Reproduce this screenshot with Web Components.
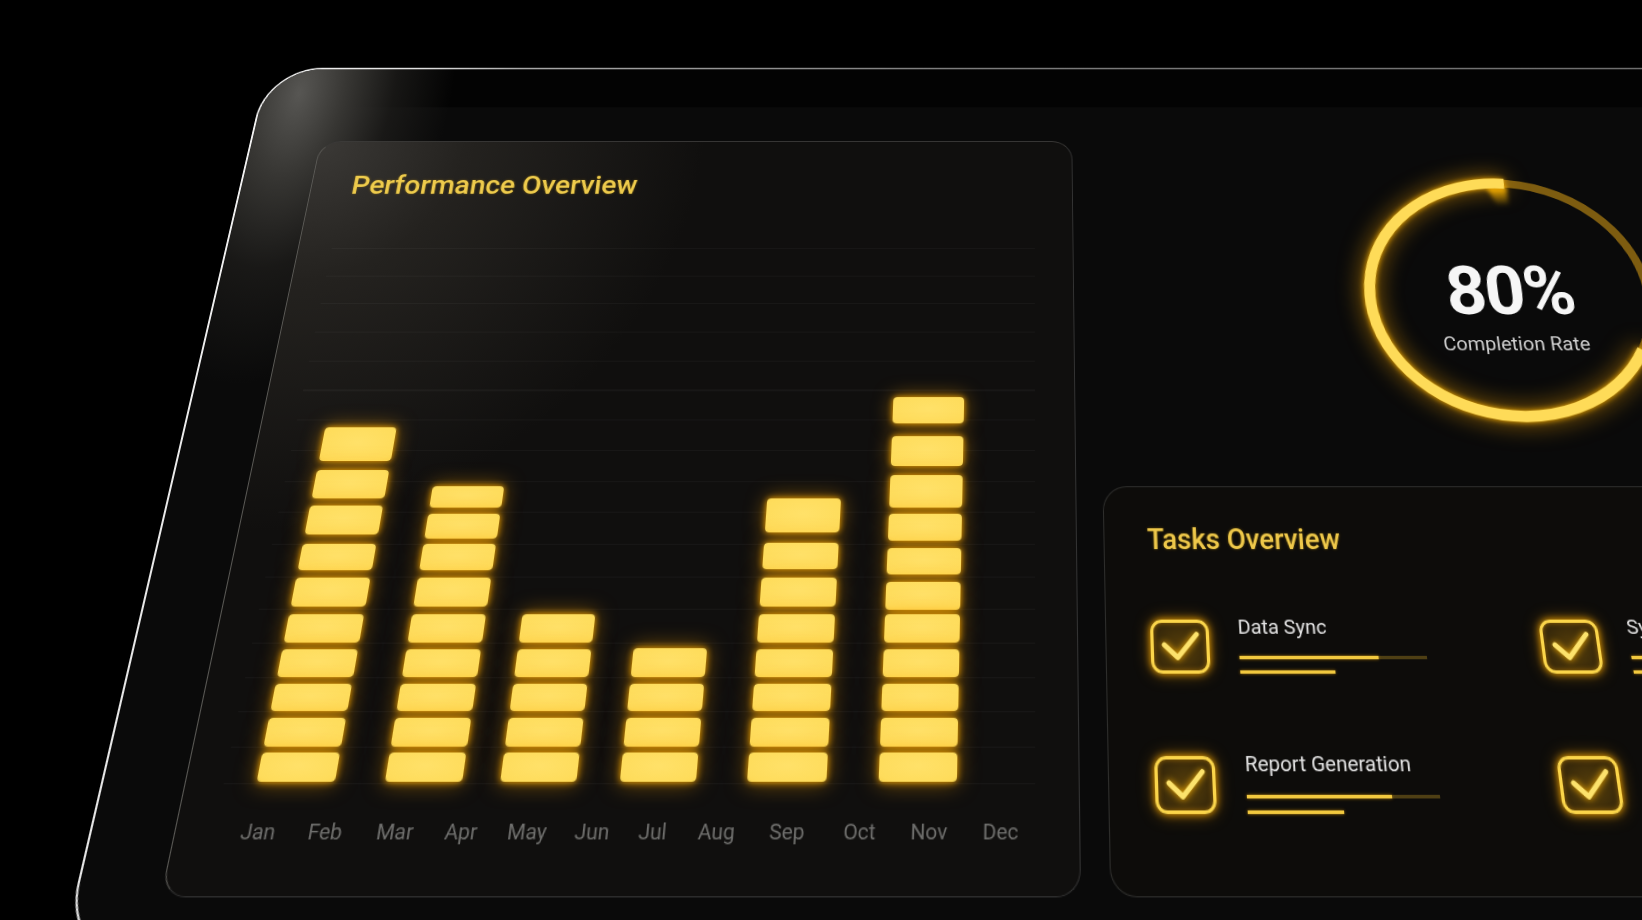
<!DOCTYPE html>
<html lang="en">
<head>
<meta charset="utf-8">
<title>Performance dashboard</title>
<style>
html,body{margin:0;height:100%;overflow:hidden;background:#000;font-family:Roboto,"Liberation Sans",sans-serif}
</style>
</head>
<body>
<tilt-stage>
  <device-frame>
    <perf-card slot="left" title-text="Performance Overview">
      <bar-column width="72.5" rows="24.2/5.7 24.2/6.2 24.2/5.8 25.2/6.3 26/6.8 27.3/6.3 25.3/9 28/7.6 27.6/8.5 34.9/0" gap="0"></bar-column>
      <bar-column width="71" rows="24.2/5.7 24.2/6.2 24.2/5.8 25.2/6.3 26/6.8 27.3/6.3 25.3/5.4 24.1/5.9 20.3/0" gap="45.5"></bar-column>
      <bar-column width="70" rows="24.2/5.7 24.2/6.2 24.2/5.8 25.2/6.3 26/0" gap="35.5"></bar-column>
      <bar-column width="70" rows="24.2/5.7 24.2/6.2 24.2/5.8 26.4/0" gap="39.5"></bar-column>
      <bar-column width="73" rows="24.2/5.7 24.2/6.2 24.2/5.8 25.2/6.3 26/6.8 27.3/7.9 25.2/9.7 33.4/0" gap="47.3"></bar-column>
      <bar-column width="72" rows="24.2/5.7 24.2/6.2 24.2/5.8 25.2/6.3 26/3.5 26.5/6.7 24.8/7.4 26.1/6 31.9/9.3 29.6/12.8 26.8/0" gap="48.7"></bar-column>
    </perf-card>
    <ring-gauge slot="right" value="80%" caption="Completion Rate"></ring-gauge>
    <tasks-card slot="right" title-text="Tasks Overview">
      <task-item label="Data Sync" fill="132" track="178" second="90"></task-item>
      <task-item label="Sy" fill="132" track="178" second="90"></task-item>
      <task-item label="Report Generation" fill="133" track="177" second="88"></task-item>
      <task-item label="" fill="133" track="177" second="88"></task-item>
    </tasks-card>
  </device-frame>
</tilt-stage>
<script>
function shadow(el,html){el.attachShadow({mode:'open'}).innerHTML=html;}

customElements.define('tilt-stage',class extends HTMLElement{
  constructor(){super();shadow(this,`<style>
    :host{display:block;width:1642px;height:920px;box-sizing:border-box;padding:21px 0 0 175.5px;
      transform-origin:1033px 460px;filter:blur(.45px);
      transform:matrix3d(1,0,0,0, 0,1,0,-0.00027137, 0,0,1,0, 0,0,0,1)}
  </style><slot></slot>`);}
});

customElements.define('device-frame',class extends HTMLElement{
  constructor(){super();shadow(this,`<style>
    :host{display:block;width:1760px;height:880px;box-sizing:border-box;border:2.5px solid transparent;border-radius:62px;
      background:
        radial-gradient(ellipse 170px 330px at 40px 30px,#575653 0%,#373633 30%,rgba(30,29,27,.75) 62%,rgba(12,12,11,0) 100%) padding-box,
        linear-gradient(#030303 0 47px,#0a0a0a 47px) padding-box,
        linear-gradient(100deg,#f4f4f4 0%,#e0e0e0 9%,#a8a8a8 15%,#7c7c7c 40%,#666 100%) border-box}
    .strip{height:47px}
    .body{display:flex;gap:26px;padding:41px 0 0 75px}
    .right{flex:1;display:flex;flex-direction:column;min-width:0}
  </style><div class="strip"></div><div class="body"><slot name="left"></slot><div class="right"><slot name="right"></slot></div></div>`);}
});

customElements.define('perf-card',class extends HTMLElement{
  constructor(){super();
    const months=[['Jan',61.2],['Feb',60.6],['Mar',66.4],['Apr',53.6],['May',66.4],['Jun',51.6],['Jul',58.4],['Aug',57.6],['Sep',70.4],['Oct',61.6],['Nov',64.4],['Dec',65.6]];
    shadow(this,`<style>
    :host{display:block;flex:none;width:823px;height:740px;box-sizing:border-box;border:1.5px solid #333;border-top-color:#3d3c3a;border-left-color:#5a5955;border-radius:22px;padding:33.5px 39.5px 0 35.5px;
      background:radial-gradient(ellipse 420px 420px at 0 0,#3b3936 0%,#24221f 38%,rgba(20,19,16,0) 100%),#100f0e}
    h2{margin:0 0 0 8px;font:500 30.3px/34px Roboto,sans-serif;color:#eecb4c;text-shadow:0 0 3px rgba(255,190,0,.35)}
    .chart{margin-top:55px;height:523px;box-sizing:border-box;padding:0 0 2px 29.5px;display:flex;align-items:flex-end;
      background:repeating-linear-gradient(to bottom,rgba(255,255,255,.035) 0 1px,transparent 1px 30.7px)}
    .months{margin:28.5px 0 0 9.5px;display:grid;grid-template-columns:${months.map(m=>m[1]+'px').join(' ')};
      font:400 19px/24px Roboto,sans-serif;color:#6f6f6d;text-align:center}
  </style><h2>${this.getAttribute('title-text')}</h2><div class="chart"><slot></slot></div>
  <div class="months">${months.map(m=>`<span>${m[0]}</span>`).join('')}</div>`);}
});

customElements.define('bar-column',class extends HTMLElement{
  constructor(){super();
    const rows=this.getAttribute('rows').split(' ').map(r=>r.split('/'));
    shadow(this,`<style>
    :host{display:flex;flex-direction:column-reverse;flex:none;width:${this.getAttribute('width')}px;margin-left:${this.getAttribute('gap')}px}
    i{display:block;border-radius:4px;background:radial-gradient(ellipse at 50% 45%,#ffe169 0%,#fedc5b 80%,#fcd650 100%);
      box-shadow:0 0 6px #f7a800,0 0 20px rgba(255,165,0,.55)}
  </style>${rows.map(r=>`<i style="height:${r[0]}px;margin-top:${r[1]}px"></i>`).join('')}`);}
});

customElements.define('ring-gauge',class extends HTMLElement{
  constructor(){super();shadow(this,`<style>
    :host{display:block;flex:none;height:375px;box-sizing:border-box;padding:22px 0 0 256px}
    .stack{display:grid;width:340px;height:310px}
    .stack>*{grid-area:1/1}
    svg{overflow:visible}
    .glow{filter:drop-shadow(0 0 3px #ffb400) drop-shadow(0 0 12px rgba(255,170,0,.65))}
    .text{display:flex;flex-direction:column;align-items:center;padding:113px 0 0 10px;text-align:center}
    b{font:700 74px/74px Roboto,sans-serif;letter-spacing:-2px;color:#f6f6f6}
    span{margin-top:7px;font:400 20.5px/26px Roboto,sans-serif;color:#cfcfcf}
  </style><div class="stack">
    <svg viewBox="0 0 340 310" width="340" height="310" aria-hidden="true">
      <defs><linearGradient id="tail" x1="0" y1="0" x2="0" y2="1"><stop offset="0" stop-color="#ffb800"/><stop offset="1" stop-color="#ffb800" stop-opacity="0"/></linearGradient>
      <filter id="soft" x="-50%" y="-50%" width="200%" height="200%"><feGaussianBlur stdDeviation="2.5"/></filter></defs>
      <ellipse cx="173.5" cy="155.4" rx="146" ry="127.4" fill="none" stroke="#7d5c10" stroke-width="9"/>
      <path d="M164 32H186V54H174Z" fill="url(#tail)" filter="url(#soft)"/>
      <path class="glow" d="M184 28.4A146 127.4 0 1 0 303.6 213.7" fill="none" stroke="#fedb58" stroke-width="11.5"/>
    </svg>
    <div class="text"><b>${this.getAttribute('value')}</b><span>${this.getAttribute('caption')}</span></div>
  </div>`);}
});

customElements.define('tasks-card',class extends HTMLElement{
  constructor(){super();shadow(this,`<style>
    :host{display:block;height:365px;box-sizing:border-box;border:1.5px solid #2e2e2c;border-radius:24px 0 0 24px;border-right:0;padding:34px 0 0 42.3px;background:#0d0c0a}
    h2{margin:0 0 52.4px;font:500 27px/34px Roboto,sans-serif;color:#eec84a;text-shadow:0 0 3px rgba(255,190,0,.35)}
    .grid{display:grid;grid-template-columns:372px 372px;row-gap:66.3px}
  </style><h2>${this.getAttribute('title-text')}</h2><div class="grid"><slot></slot></div>`);}
});

customElements.define('task-item',class extends HTMLElement{
  constructor(){super();
    const a=n=>this.getAttribute(n);
    shadow(this,`<style>
    :host{display:flex;align-items:flex-start;gap:28px}
    .box{flex:none;width:56px;height:49px;box-sizing:border-box;margin-top:5.7px;display:flex;border:3px solid #fbd54a;border-radius:11px;
      background:radial-gradient(ellipse at 50% 55%,rgba(150,105,10,.55),rgba(120,85,10,.28));
      box-shadow:0 0 7px #f7a800,0 0 16px rgba(255,165,0,.4),inset 0 0 5px rgba(255,170,0,.5)}
    svg{margin:-3px;filter:drop-shadow(0 0 3px #ffb400)}
    .t{display:block;height:24px;margin:1px 0 13.9px;font:400 19px/24px Roboto,sans-serif;color:#e4e4e4;white-space:nowrap}
    .track{width:${a('track')}px;height:3px;background:#4e3f14;margin-bottom:9.3px}
    .track i,.short{display:block;height:3px;background:#f2c93f;box-shadow:0 0 3px rgba(255,176,0,.6)}
    .track i{width:${a('fill')}px}
    .short{width:${a('second')}px}
  </style><div class="box"><svg viewBox="0 0 56 49" width="56" height="49" aria-hidden="true"><path d="M13 23 25.5 34.5 44 13.5" fill="none" stroke="#fce26c" stroke-width="4.6" stroke-linecap="round" stroke-linejoin="round"/></svg></div>
  <div><span class="t">${a('label')}</span><div class="track"><i></i></div><div class="short"></div></div>`);}
});
</script>
</body>
</html>
